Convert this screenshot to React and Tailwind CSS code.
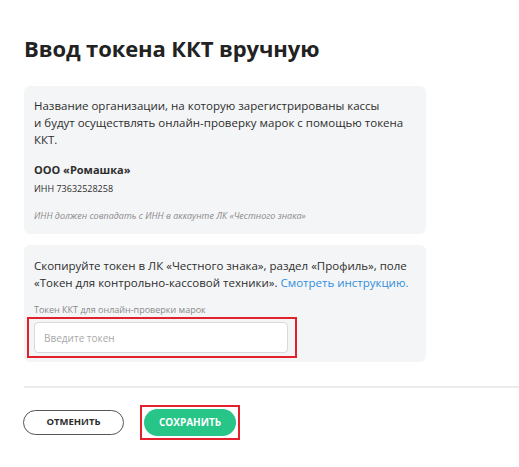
import React from 'react';

const App = () => {
  return (
    <div className="min-h-[467px] w-[519px] bg-white font-['Open_Sans',sans-serif] text-[#2d2d2d]">
      <div className="pl-6 pt-[33px]">
        <h1 className="text-[22px] leading-[30px] font-bold text-[#222] tracking-[-0.1px]">
          Ввод токена ККТ вручную
        </h1>

        {/* org card */}
        <div className="mt-[23px] w-[402px] rounded-md bg-[#f4f5f7] px-[10px] pt-[11px] pb-[12px]">
          <p className="text-[11.5px] leading-[17px]">
            Название организации, на которую зарегистрированы кассы
            <br />и будут осуществлять онлайн-проверку марок с помощью токена
            <br />ККТ.
          </p>
          <p className="mt-[13px] text-[11px] leading-[17px] font-bold">ООО «Ромашка»</p>
          <p className="mt-[5px] text-[9px] leading-[12px]">ИНН 73632528258</p>
          <p className="mt-[15px] text-[9px] leading-[12px] italic text-[#8a8a8a]">
            ИНН должен совпадать с ИНН в аккаунте ЛК «Честного знака»
          </p>
        </div>

        {/* token card */}
        <div className="mt-[11px] w-[402px] rounded-md bg-[#f4f5f7] px-[10px] pt-[12px] pb-[4px]">
          <p className="text-[11.5px] leading-[17px]">
            Скопируйте токен в ЛК «Честного знака», раздел «Профиль», поле
            <br />«Токен для контрольно-кассовой техники».{' '}
            <span className="text-[#2f8fdd]">Смотреть инструкцию.</span>
          </p>
          <p className="mt-[13px] text-[9px] leading-[12px] text-[#8a8a8a]">
            Токен ККТ для онлайн-проверки марок
          </p>
          <div className="-ml-[7px] mt-px w-[270px] border-2 border-[#e3212b] pl-[5px] pr-[7px] py-[3px]">
            <input
              type="text"
              placeholder="Введите токен"
              className="h-[31px] w-full rounded-[4px] border border-[#d9d9d9] bg-white px-[9px] text-[10px] placeholder-[#a9a9a9] outline-none"
            />
          </div>
        </div>

        <div className="mt-[24px] h-[2px] bg-[#ececec]"></div>

        <div className="mt-[17px] flex items-center">
          <button className="-ml-px h-[25px] w-[101px] rounded-full border border-[#555] text-[9.5px] font-bold text-[#2d2d2d]">
            ОТМЕНИТЬ
          </button>
          <div className="ml-4 border-2 border-[#e3212b] p-[2px]">
            <button className="block h-[27px] w-[92px] rounded-full bg-[#27c587] text-[10px] font-bold text-white">
              СОХРАНИТЬ
            </button>
          </div>
        </div>
      </div>
    </div>
  );
};

export default App;
